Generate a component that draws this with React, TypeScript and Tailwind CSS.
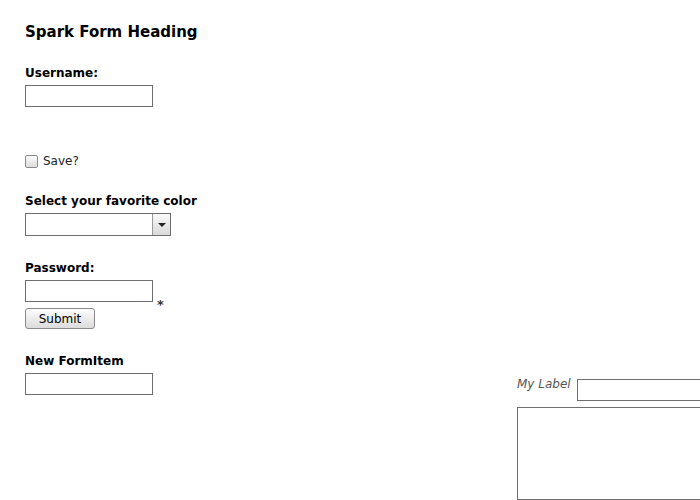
import React from "react";

const font = { fontFamily: '"DejaVu Sans", Verdana, sans-serif' };

const TextBox = ({ className = "" }: { className?: string }) => (
  <div className={`h-[22px] w-[128px] border border-[#6e6e6e] bg-white ${className}`} />
);

const Label = ({ children, className = "" }: { children: React.ReactNode; className?: string }) => (
  <div className={`text-[12px] font-bold leading-[14px] text-black ${className}`}>{children}</div>
);

export default function App() {
  return (
    <div
      className="flex h-[500px] w-[700px] overflow-hidden bg-white text-black"
      style={font}
    >
      {/* Left form column */}
      <div className="flex w-[492px] shrink-0 flex-col items-start pl-[25px] pt-[23px]">
        <h1 className="text-[15px] font-bold leading-[18px]">Spark Form Heading</h1>

        <Label className="mt-[25px]">Username:</Label>
        <TextBox className="mt-[5px]" />

        {/* Checkbox */}
        <div className="mt-[46px] flex h-[16px] items-center gap-[5px]">
          <div className="h-[13px] w-[13px] rounded-[2px] border border-[#8a8a8a] bg-gradient-to-b from-[#fbfbfb] to-[#dedede]" />
          <span className="text-[12px] leading-[14px] text-[#222]">Save?</span>
        </div>

        <Label className="mt-[25px]">Select your favorite color</Label>
        <div className="mt-[5px] flex h-[23px] w-[146px] border border-[#6e6e6e] bg-white">
          <div className="flex-1" />
          <div className="flex w-[18px] items-center justify-center border-l border-[#9a9a9a] bg-gradient-to-b from-[#fafafa] to-[#d9d9d9]">
            <div className="h-0 w-0 border-x-[4px] border-t-[4px] border-x-transparent border-t-[#222]" />
          </div>
        </div>

        <Label className="mt-[25px]">Password:</Label>
        <div className="mt-[5px] flex items-end gap-[4px]">
          <TextBox />
          <span className="-mb-[10px] text-[13px] font-bold leading-[14px] text-[#333]">*</span>
        </div>
        <button className="mt-[6px] h-[21px] w-[70px] rounded-[3px] border border-[#8a8a8a] bg-gradient-to-b from-[#fdfdfd] to-[#dcdcdc] text-[12px] leading-[14px] text-black">
          Submit
        </button>

        <Label className="mt-[25px]">New FormItem</Label>
        <TextBox className="mt-[5px]" />
      </div>

      {/* Right group */}
      <div className="flex shrink-0 flex-col pl-[25px] pt-[379px]">
        <div className="flex items-start gap-[6px]">
          <span className="-mt-[2px] whitespace-nowrap text-[12px] italic leading-[14px] text-[#555]">My Label</span>
          <TextBox className="w-[200px]" />
        </div>
        <div className="mt-[6px] h-[160px] w-[260px] border border-[#6e6e6e] bg-white" />
      </div>
    </div>
  );
}
